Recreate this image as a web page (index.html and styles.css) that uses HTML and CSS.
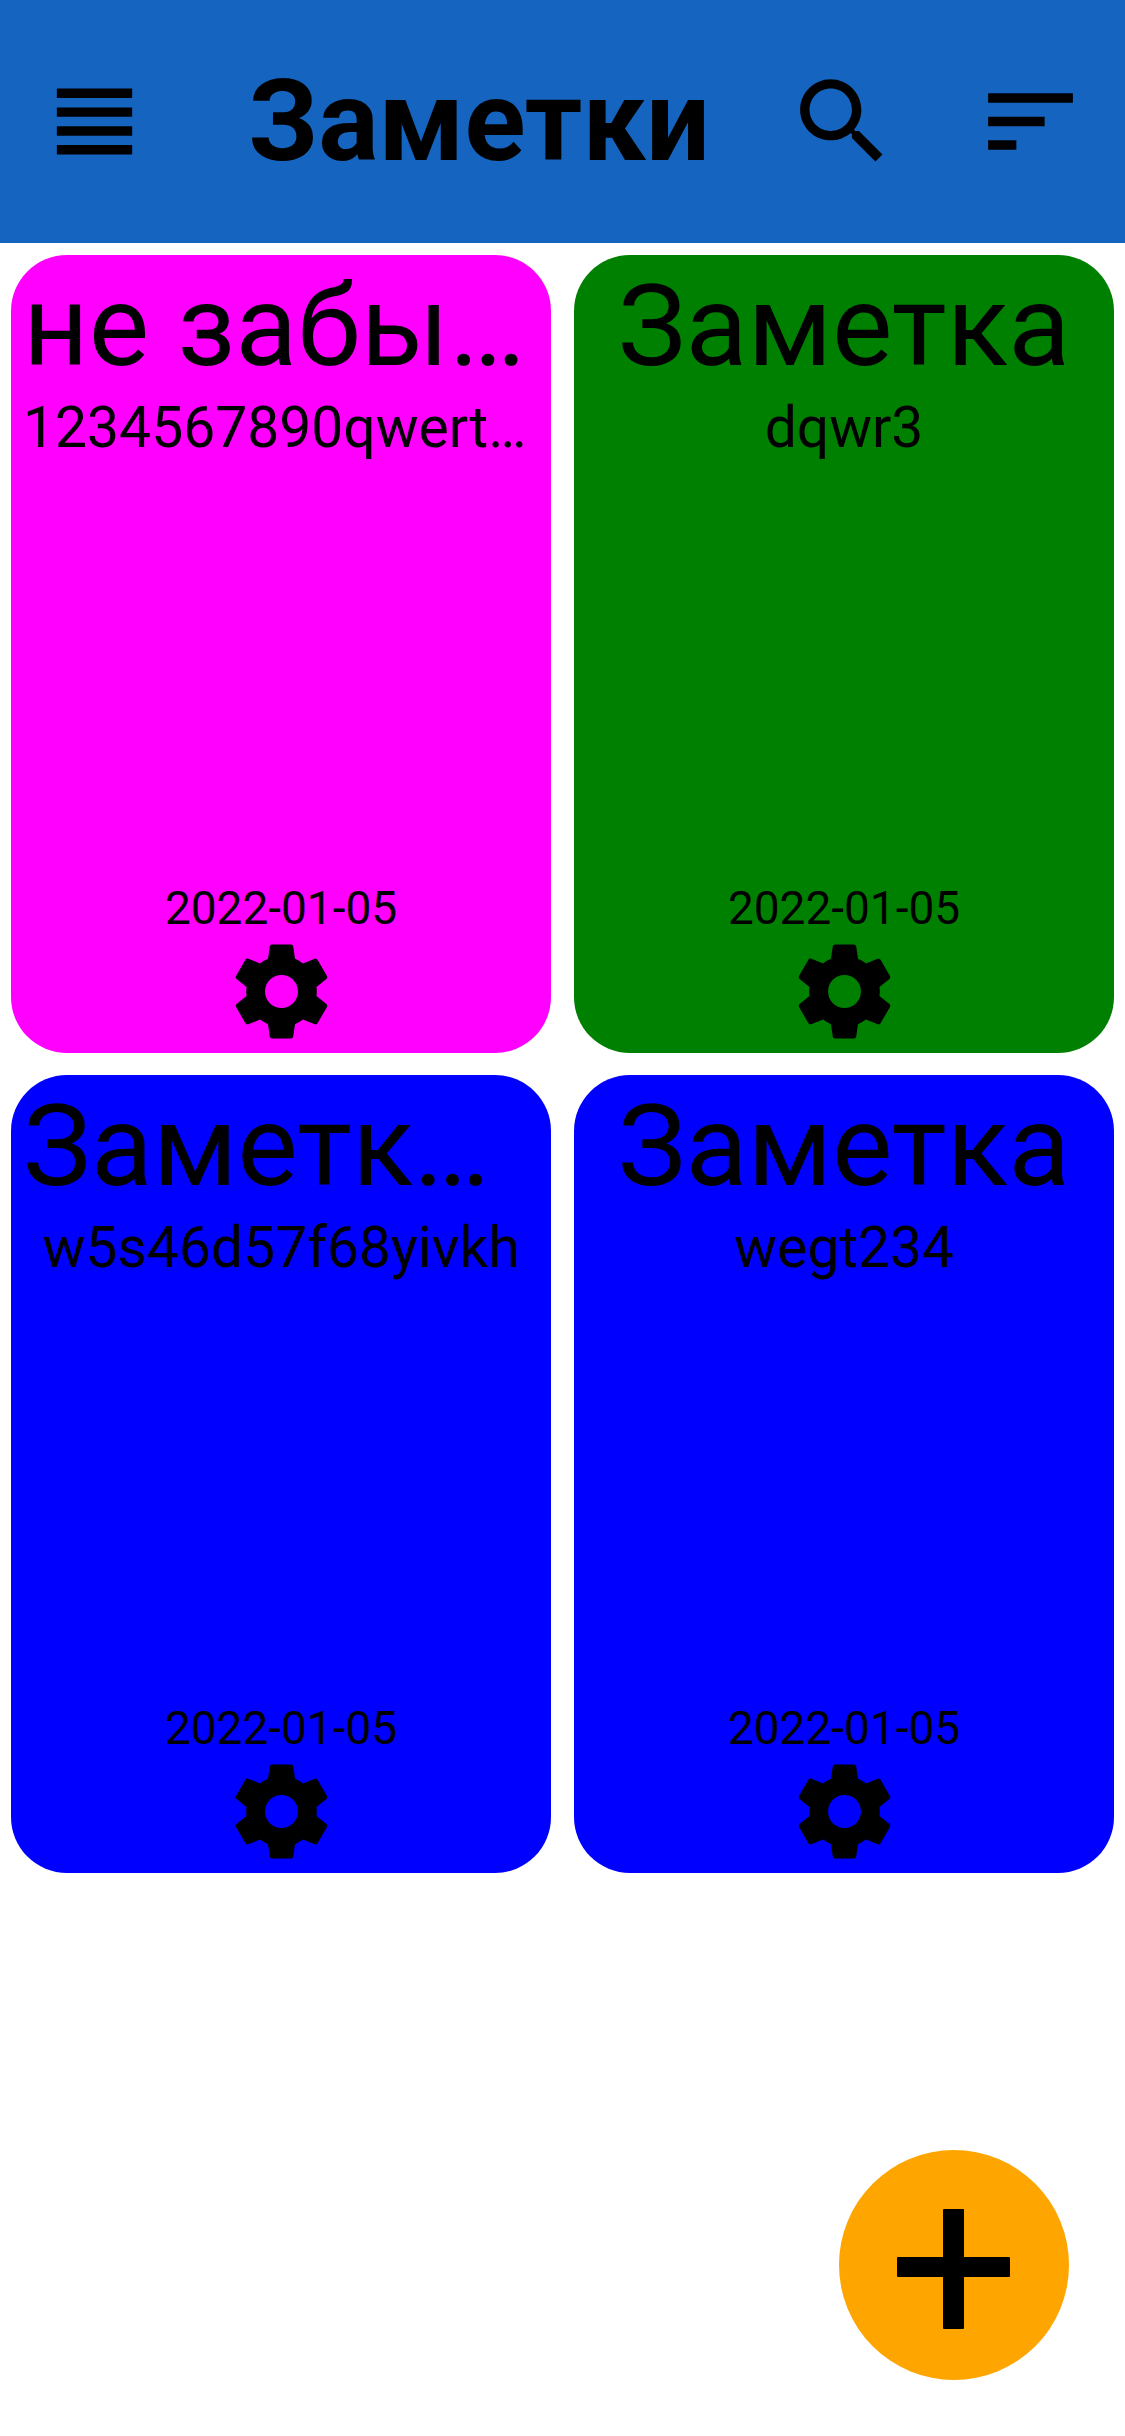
FILE: index.html
```html
<!DOCTYPE html>
<html lang="ru">
<head>
  <meta charset="utf-8">
  <meta name="viewport" content="width=device-width, initial-scale=1">
  <title>Заметки</title>
  <link rel="stylesheet" href="styles.css">
</head>
<body>
  <svg class="sprite" aria-hidden="true">
    <symbol id="gear" viewBox="0 0 24 24">
      <path d="M19.43 12.98c.04-.32.07-.64.07-.98s-.03-.66-.07-.98l2.11-1.65c.19-.15.24-.42.12-.64l-2-3.46c-.12-.22-.39-.3-.61-.22l-2.49 1c-.52-.4-1.08-.73-1.69-.98l-.38-2.65C14.46 2.18 14.25 2 14 2h-4c-.25 0-.46.18-.49.42l-.38 2.65c-.61.25-1.17.59-1.69.98l-2.49-1c-.23-.09-.49 0-.61.22l-2 3.46c-.13.22-.07.49.12.64l2.11 1.65c-.04.32-.07.65-.07.98s.03.66.07.98l-2.11 1.65c-.19.15-.24.42-.12.64l2 3.46c.12.22.39.3.61.22l2.49-1c.52.4 1.08.73 1.69.98l.38 2.65c.03.24.24.42.49.42h4c.25 0 .46-.18.49-.42l.38-2.65c.61-.25 1.17-.59 1.69-.98l2.49 1c.23.09.49 0 .61-.22l2-3.46c.12-.22.07-.49-.12-.64l-2.11-1.65zM12 15.5c-1.93 0-3.5-1.57-3.5-3.5s1.57-3.5 3.5-3.5 3.5 1.57 3.5 3.5-1.57 3.5-3.5 3.5z"/>
    </symbol>
  </svg>

  <header class="topbar">
    <button class="icon-button" type="button" aria-label="Меню">
      <svg class="icon" viewBox="0 0 24 24"><path d="M4 15h16v-2H4v2zm0 4h16v-2H4v2zm0-8h16V9H4v2zm0-6v2h16V5H4z"/></svg>
    </button>
    <h1 class="topbar-title">Заметки</h1>
    <button class="icon-button" type="button" aria-label="Поиск">
      <svg class="icon" viewBox="0 0 24 24"><path d="M15.5 14h-.79l-.28-.27C15.41 12.59 16 11.11 16 9.5 16 5.91 13.09 3 9.5 3S3 5.91 3 9.5 5.91 16 9.5 16c1.61 0 3.09-.59 4.23-1.57l.27.28v.79l5 4.99L20.49 19l-4.99-5zm-6 0C7.01 14 5 11.99 5 9.5S7.01 5 9.5 5 14 7.01 14 9.5 11.99 14 9.5 14z"/></svg>
    </button>
    <button class="icon-button" type="button" aria-label="Сортировка">
      <svg class="icon" viewBox="0 0 24 24"><path d="M3 18h6v-2H3v2zM3 6v2h18V6H3zm0 7h12v-2H3v2z"/></svg>
    </button>
  </header>

  <main class="notes">
    <article class="note note-magenta">
      <h2 class="note-title">не забыть</h2>
      <p class="note-text">1234567890qwertyuiop</p>
      <time class="note-date" datetime="2022-01-05">2022-01-05</time>
      <button class="icon-button" type="button" aria-label="Настройки заметки"><svg class="icon"><use href="#gear"/></svg></button>
    </article>
    <article class="note note-green">
      <h2 class="note-title">Заметка</h2>
      <p class="note-text">dqwr3</p>
      <time class="note-date" datetime="2022-01-05">2022-01-05</time>
      <button class="icon-button" type="button" aria-label="Настройки заметки"><svg class="icon"><use href="#gear"/></svg></button>
    </article>
    <article class="note note-blue">
      <h2 class="note-title">Заметка 2</h2>
      <p class="note-text">w5s46d57f68yivkh</p>
      <time class="note-date" datetime="2022-01-05">2022-01-05</time>
      <button class="icon-button" type="button" aria-label="Настройки заметки"><svg class="icon"><use href="#gear"/></svg></button>
    </article>
    <article class="note note-blue">
      <h2 class="note-title">Заметка</h2>
      <p class="note-text">wegt234</p>
      <time class="note-date" datetime="2022-01-05">2022-01-05</time>
      <button class="icon-button" type="button" aria-label="Настройки заметки"><svg class="icon"><use href="#gear"/></svg></button>
    </article>
  </main>

  <button class="add-button" type="button" aria-label="Добавить заметку">
    <svg class="add-icon" viewBox="0 0 130 130"><rect x="54" y="9" width="21" height="120" rx="1"/><rect x="8" y="57" width="113" height="20" rx="1"/></svg>
  </button>
</body>
</html>
```
FILE: styles.css
```css
* {
  box-sizing: border-box;
}

body {
  margin: 0;
  background: #fff;
  color: #000;
  font-family: Roboto, "Noto Sans", sans-serif;
}

.sprite {
  display: none;
}

.icon-button {
  flex: none;
  display: block;
  padding: 0;
  border: 0;
  background: none;
  color: inherit;
  cursor: pointer;
}

.icon {
  display: block;
  width: 113px;
  height: 113px;
  fill: currentColor;
}

.topbar {
  display: flex;
  align-items: center;
  justify-content: space-around;
  padding: 65px 0;
  background: #1565c0;
}

.topbar-title {
  margin: -10px 0;
  padding-left: 22px;
  font-size: 113px;
  font-weight: 700;
  line-height: 132px;
}

.notes {
  display: grid;
  grid-template-columns: repeat(2, minmax(0, 1fr));
  gap: 22px 23px;
  padding: 12px 11px;
}

.note {
  display: flex;
  flex-direction: column;
  align-items: center;
  min-height: 798px;
  padding: 5px 12px;
  border-radius: 56px;
}

.note-magenta {
  background: #f0f;
}

.note-green {
  background: #008000;
}

.note-blue {
  background: #00f;
}

.note-title,
.note-text {
  max-width: 100%;
  margin: 0;
  overflow: hidden;
  font-weight: 400;
  text-overflow: ellipsis;
  white-space: nowrap;
}

.note-title {
  font-size: 114px;
  line-height: 132px;
}

.note-text {
  margin-top: 3px;
  font-size: 57px;
  line-height: 66px;
}

.note-date {
  margin-top: auto;
  font-size: 46px;
  line-height: 54px;
}

.add-button {
  position: fixed;
  right: 56px;
  bottom: 56px;
  display: grid;
  place-items: center;
  width: 230px;
  height: 230px;
  padding: 0;
  border: 0;
  border-radius: 50%;
  background: #ffa500;
  cursor: pointer;
}

.add-icon {
  display: block;
  width: 130px;
  height: 130px;
}
```
